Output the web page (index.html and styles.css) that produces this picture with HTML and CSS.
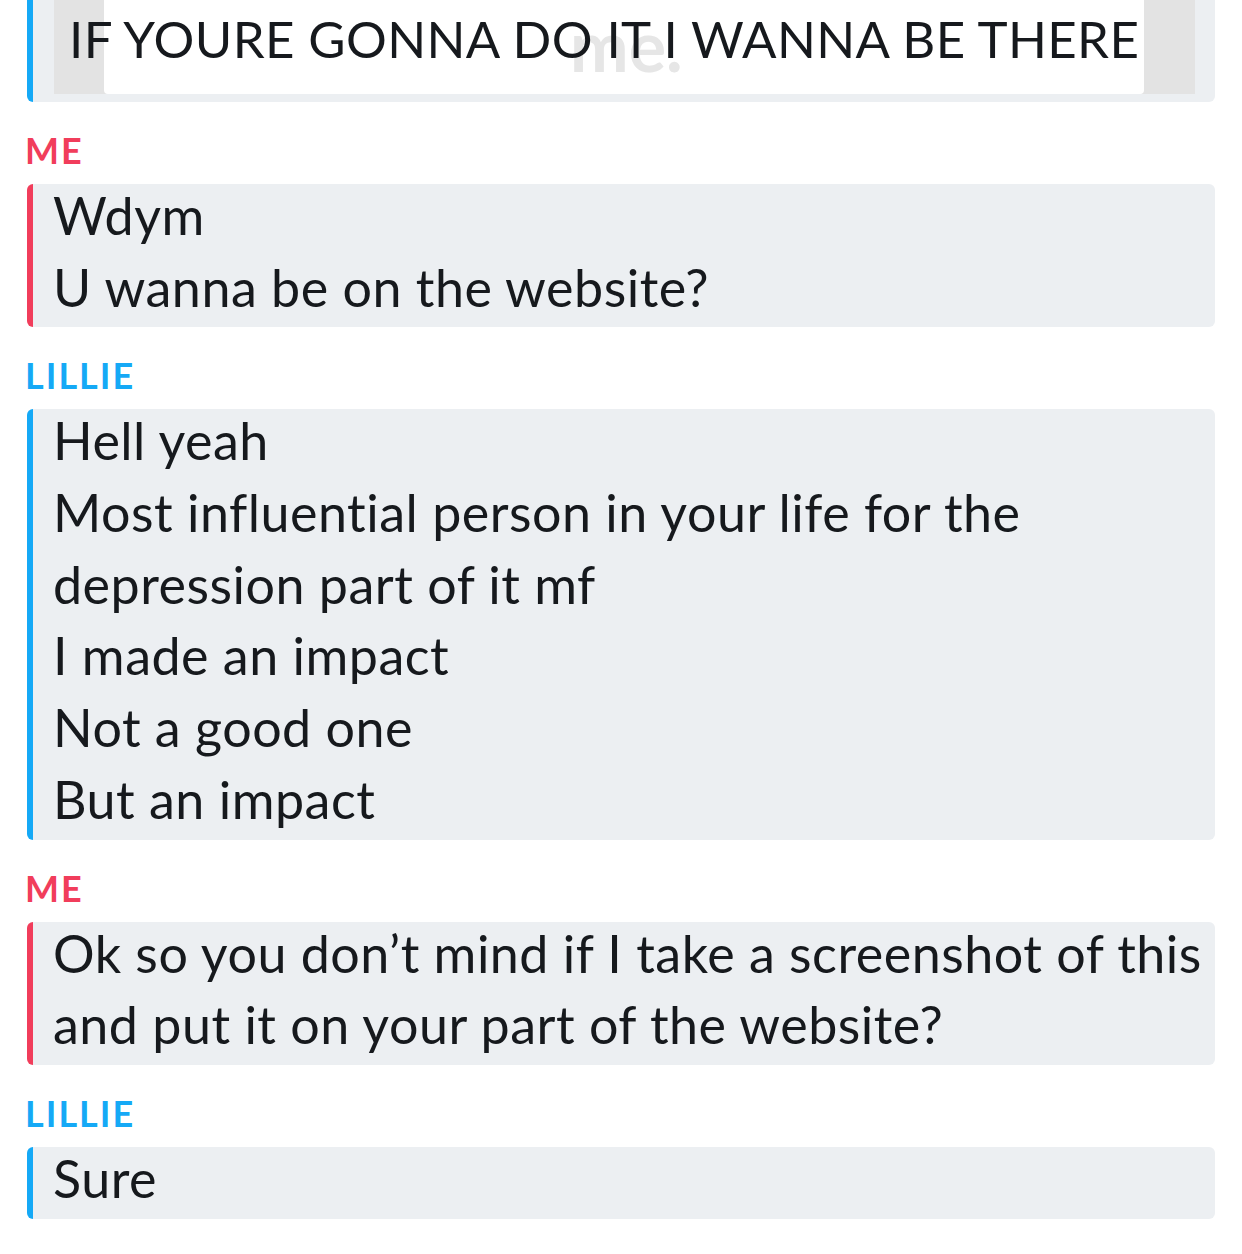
FILE: index.html
```html
<!DOCTYPE html>
<html>
<head>
<meta charset="utf-8">
<link rel="stylesheet" href="styles.css">
</head>
<body>
<div class="chat">
  <div class="bubble blue top">
    <div class="media">
      <div class="media-inner"></div>
      <span class="watermark">me.</span>
      <div class="caption">IF YOURE GONNA DO IT I WANNA BE THERE</div>
    </div>
  </div>

  <div class="label me">ME</div>
  <div class="bubble red">
    <p class="line">Wdym</p>
    <p class="line">U wanna be on the website?</p>
  </div>

  <div class="label lillie">LILLIE</div>
  <div class="bubble blue">
    <p class="line">Hell yeah</p>
    <p class="line">Most influential person in your life for the</p>
    <p class="line">depression part of it mf</p>
    <p class="line">I made an impact</p>
    <p class="line">Not a good one</p>
    <p class="line">But an impact</p>
  </div>

  <div class="label me">ME</div>
  <div class="bubble red">
    <p class="line">Ok so you don’t mind if I take a screenshot of this</p>
    <p class="line">and put it on your part of the website?</p>
  </div>

  <div class="label lillie">LILLIE</div>
  <div class="bubble blue">
    <p class="line">Sure</p>
  </div>
</div>
</body>
</html>
```

FILE: styles.css
```css
html, body {
  margin: 0;
  padding: 0;
  background: #ffffff;
}

.chat {
  display: flex;
  flex-direction: column;
  padding: 0 27px 0 27px;
  font-family: "Lato", "Liberation Sans", sans-serif;
  color: #16191d;
}

.bubble {
  background: #eceff2;
  border-left: 6px solid #15a9f6;
  border-radius: 6px;
  padding: 0 8px 0 20px;
}

.bubble.red {
  border-left-color: #f13d5b;
}

.line {
  margin: 0;
  font-size: 52px;
  line-height: 62px;
  padding-bottom: 9.7px;
  font-weight: 400;
  letter-spacing: 0.5px;
  font-variant-ligatures: none;
  white-space: nowrap;
}

.bubble.top {
  border-radius: 0 0 6px 6px;
  padding: 0 20px 8px 21px;
}

.media {
  position: relative;
  height: 94px;
  background: #e3e3e3;
  padding: 0 51px 0 50px;
  overflow: hidden;
}

.media-inner {
  height: 94px;
  background: #ffffff;
  border-radius: 0 0 4px 4px;
}

.watermark {
  position: absolute;
  left: 516px;
  top: 10px;
  font-size: 70px;
  font-weight: 700;
  color: #e6e6e6;
  line-height: 1;
}

.caption {
  position: absolute;
  left: 15px;
  top: 8px;
  font-size: 51px;
  line-height: 62px;
  font-weight: 400;
  letter-spacing: 0.4px;
  white-space: nowrap;
  color: #16191d;
}

.label {
  margin: 30px 0 16px -2px;
  font-size: 36px;
  line-height: 36px;
  font-weight: 700;
  letter-spacing: 2px;
}

.label.me {
  color: #f13d5b;
}

.label.lillie {
  color: #15a9f6;
}
```
